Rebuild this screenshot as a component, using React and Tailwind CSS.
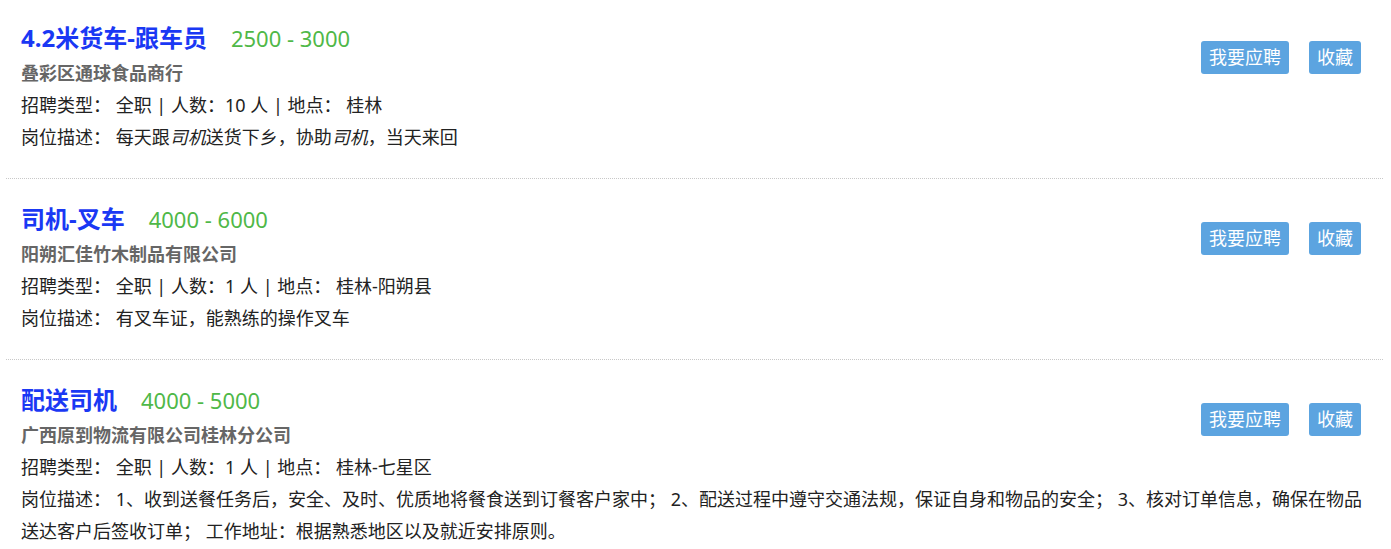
import React from "react";

const jobs = [
  {
    title: "4.2米货车-跟车员",
    salary: "2500 - 3000",
    company: "叠彩区通球食品商行",
    count: "10",
    place: "桂林",
    desc: (
      <>
        每天跟<em>司机</em>送货下乡，协助<em>司机</em>，当天来回
      </>
    ),
  },
  {
    title: "司机-叉车",
    salary: "4000 - 6000",
    company: "阳朔汇佳竹木制品有限公司",
    count: "1",
    place: "桂林-阳朔县",
    desc: "有叉车证，能熟练的操作叉车",
  },
  {
    title: "配送司机",
    salary: "4000 - 5000",
    company: "广西原到物流有限公司桂林分公司",
    count: "1",
    place: "桂林-七星区",
    desc: "1、收到送餐任务后，安全、及时、优质地将餐食送到订餐客户家中； 2、配送过程中遵守交通法规，保证自身和物品的安全； 3、核对订单信息，确保在物品送达客户后签收订单； 工作地址：根据熟悉地区以及就近安排原则。",
  },
];

function JobItem({ job, first }) {
  return (
    <div
      className={
        "px-[15px] pb-[25px] border-b border-dotted border-[#c8c8c8] " +
        (first ? "pt-[19px]" : "pt-[21px]")
      }
    >
      <div className="flex justify-between items-start">
        <div>
          <div className="flex items-center leading-[38px]">
            <span className="text-[24px] font-bold text-[#1a38f4]">
              {job.title}
            </span>
            <span className="ml-[24px] text-[22px] text-[#4fb848]">
              {job.salary}
            </span>
          </div>
          <div className="leading-8 font-bold text-[#666] text-[18px]">
            {job.company}
          </div>
        </div>
        <div className="flex gap-5 mt-[22px] mr-[7px]">
          <button className="h-[33px] px-2 rounded-[3px] bg-[#5ca4e0] text-white text-[18px] leading-[33px]">
            我要应聘
          </button>
          <button className="h-[33px] px-2 rounded-[3px] bg-[#5ca4e0] text-white text-[18px] leading-[33px]">
            收藏
          </button>
        </div>
      </div>
      <div className="leading-8 text-[18px] text-[#222]">
        招聘类型： 全职 | 人数：{job.count} 人 | 地点： {job.place}
      </div>
      <div className="leading-8 text-[18px] text-[#222]">
        岗位描述： {job.desc}
      </div>
    </div>
  );
}

export default function App() {
  return (
    <div
      className="bg-white min-h-screen pl-[6px] pr-[8px]"
      style={{ fontFamily: '"Noto Sans", "Noto Sans CJK SC", sans-serif' }}
    >
      {jobs.map((job, i) => (
        <JobItem key={i} job={job} first={i === 0} />
      ))}
    </div>
  );
}
